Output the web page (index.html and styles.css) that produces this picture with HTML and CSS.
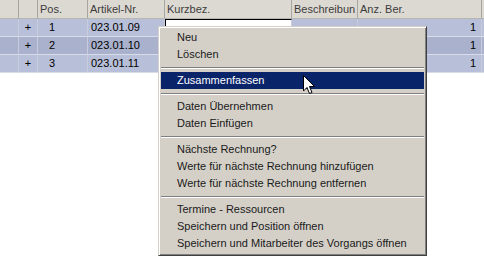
FILE: index.html
```html
<!DOCTYPE html>
<html lang="de">
<head>
    <meta charset="UTF-8">
    <title>Positionen</title>
    <link rel="stylesheet" href="styles.css">
</head>
<body>

<div class="grid">
    <div class="row head">
        <div class="cell c-sel"></div>
        <div class="cell c-exp"></div>
        <div class="cell c-pos">Pos.</div>
        <div class="cell c-art">Artikel-Nr.</div>
        <div class="cell c-kurz">Kurzbez.</div>
        <div class="cell c-beschr">Beschreibun</div>
        <div class="cell c-anz">Anz. Ber.</div>
        <div class="cell c-rest"></div>
    </div>
    <div class="row odd">
        <div class="cell c-sel"></div>
        <div class="cell c-exp">+</div>
        <div class="cell c-pos">1</div>
        <div class="cell c-art">023.01.09</div>
        <div class="cell c-kurz editing"></div>
        <div class="cell c-beschr"></div>
        <div class="cell c-anz num">1</div>
        <div class="cell c-rest"></div>
    </div>
    <div class="row even">
        <div class="cell c-sel"></div>
        <div class="cell c-exp">+</div>
        <div class="cell c-pos">2</div>
        <div class="cell c-art">023.01.10</div>
        <div class="cell c-kurz"></div>
        <div class="cell c-beschr"></div>
        <div class="cell c-anz num">1</div>
        <div class="cell c-rest"></div>
    </div>
    <div class="row odd">
        <div class="cell c-sel"></div>
        <div class="cell c-exp">+</div>
        <div class="cell c-pos">3</div>
        <div class="cell c-art">023.01.11</div>
        <div class="cell c-kurz"></div>
        <div class="cell c-beschr"></div>
        <div class="cell c-anz num">1</div>
        <div class="cell c-rest"></div>
    </div>
</div>

<div class="menu">
    <div class="item">Neu</div>
    <div class="item">Löschen</div>
    <div class="sep"></div>
    <div class="item active">Zusammenfassen</div>
    <div class="sep"></div>
    <div class="item">Daten Übernehmen</div>
    <div class="item">Daten Einfügen</div>
    <div class="sep"></div>
    <div class="item">Nächste Rechnung?</div>
    <div class="item">Werte für nächste Rechnung hinzufügen</div>
    <div class="item">Werte für nächste Rechnung entfernen</div>
    <div class="sep"></div>
    <div class="item">Termine - Ressourcen</div>
    <div class="item">Speichern und Position öffnen</div>
    <div class="item">Speichern und Mitarbeiter des Vorgangs öffnen</div>
</div>

<svg class="cursor" width="13" height="20" viewBox="0 0 13 20">
    <path d="M0.5 0.5 L0.5 16 L4 12.5 L6.5 18.5 L9 17.5 L6.5 11.5 L11.5 11.5 Z" fill="#fff" stroke="#000" stroke-width="1"/>
</svg>

</body>
</html>
```

FILE: styles.css
```css
body {
    margin: 0;
    background-color: #ffffff;
    font-family: "Liberation Sans", Arial, sans-serif;
    font-size: 11px;
    color: #000000;
    position: relative;
    width: 484px;
    height: 256px;
    overflow: hidden;
}
.grid {
    display: flex;
    flex-direction: column;
    width: 490px;
}
.row {
    display: flex;
    height: 18px;
}
.row.head {
    height: 19px;
    background-color: #dcd9d2;
    color: #3c3c3c;
}
.row.odd {
    background-color: #b8bfd8;
}
.row.even {
    background-color: #a9b1cd;
}
.cell {
    box-sizing: border-box;
    border-right: 1px solid #c8ccdc;
    border-bottom: 1px solid #d8dce8;
    padding: 0 3px;
    line-height: 17px;
    white-space: nowrap;
    overflow: hidden;
    flex: none;
}
.head .cell {
    border-right: 1px solid #a8a6a0;
    border-bottom: 1px solid #b8b6b0;
    line-height: 18px;
    padding: 0 2px;
}
.c-sel { width: 19px; }
.c-exp { width: 19px; text-align: center; }
.c-pos { width: 50px; padding-left: 4px; }
.row:not(.head) .c-pos { padding-left: 11px; }
.c-art { width: 77px; }
.c-kurz { width: 127px; }
.c-beschr { width: 66px; }
.c-anz { width: 124px; }
.c-rest { width: 20px; }
.num { text-align: right; padding-right: 5px; }
.editing {
    background-color: #ffffff;
    border-top: 1px solid #000000;
    border-left: 1px solid #000000;
}
.menu {
    position: absolute;
    left: 158px;
    top: 26px;
    width: 269px;
    box-sizing: border-box;
    padding: 2px 2px 3px;
    background-color: #d4d0c8;
    border-top: 1px solid #d4d0c8;
    border-left: 1px solid #d4d0c8;
    border-right: 1px solid #404040;
    border-bottom: 1px solid #404040;
    box-shadow: inset 1px 1px 0 #ffffff, inset -1px -1px 0 #808080;
    color: #1a1a1a;
}
.item {
    height: 17px;
    line-height: 17px;
    padding-left: 16px;
    white-space: nowrap;
}
.item.active {
    background-color: #0a246a;
    color: #ffffff;
}
.sep {
    height: 9px;
    display: flex;
    flex-direction: column;
    justify-content: center;
}
.sep::before {
    content: "";
    border-top: 1px solid #808080;
    border-bottom: 1px solid #ffffff;
}
.cursor {
    position: absolute;
    left: 303px;
    top: 75px;
}
```
